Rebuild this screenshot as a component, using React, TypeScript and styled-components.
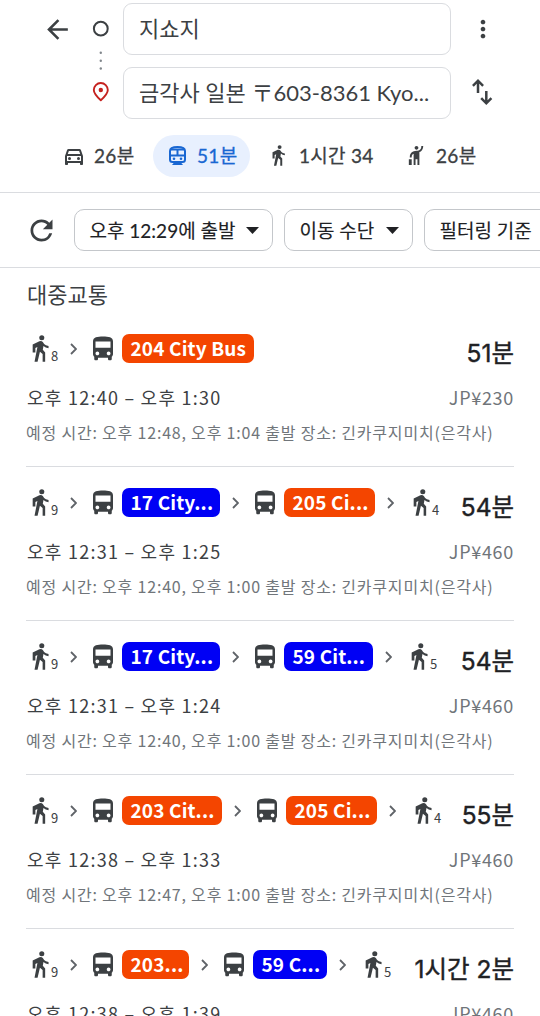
import React from "react";
import styled, { createGlobalStyle } from "styled-components";
import {
  MdArrowBack, MdDirectionsBus, MdHail, MdMoreVert, MdRefresh, MdOutlineDirectionsCar,
} from "react-icons/md";

const ui = `Lato, "Noto Sans CJK KR", sans-serif`;
const numeric = `Inter, "Noto Sans CJK KR", sans-serif`;
const body = `"Noto Sans CJK KR", sans-serif`;
const ORANGE = "#f44500";
const BLUE = "#0000f5";

const Global = createGlobalStyle`
  * { box-sizing: border-box; }
  html, body { margin: 0; background: #fff; overflow: hidden; }
`;

const Page = styled.main`
  width: 540px;
  height: 1016px;
  overflow: hidden;
  background: #fff;
  color: #3c4043;
  font-family: ${ui};
  white-space: nowrap;
`;

const Header = styled.header`
  height: 193px;
  border-bottom: 1px solid #dadce0;
`;

const Search = styled.div`
  display: grid;
  grid-template-columns: 77px 22px 11px 328px 1fr;
  height: 119px;
  padding: 3px 0 0 13px;
`;

const BackCell = styled.div`
  display: flex;
  padding: 10.5px 0 0 29px;
`;

const Stops = styled.div`
  padding-top: 16px;
`;

const Fields = styled.div`
  grid-column: 4;
  display: flex;
  flex-direction: column;
  gap: 12px;
`;

const Field = styled.div`
  height: 52px;
  border: 1px solid #dadce0;
  border-radius: 9px;
  padding: 0 15px;
  font-size: 22px;
  line-height: 49px;
`;

const SideActions = styled.div`
  display: flex;
  flex-direction: column;
  align-items: center;
  width: 63px;
  padding-top: 12px;
  gap: 33px;
`;

const Modes = styled.nav`
  display: flex;
  height: 42px;
  margin-top: 16px;
  padding-left: 50px;
`;

const Mode = styled.div<{ $width: number; $active?: boolean }>`
  display: flex;
  align-items: center;
  width: ${(p) => p.$width}px;
  margin-right: ${(p) => (p.$active ? 5 : 0)}px;
  padding: 0 0 1px 12px;
  border-radius: 21px;
  font-size: 19px;
  letter-spacing: 0.3px;
  -webkit-text-stroke: 0.3px currentColor;
  color: ${(p) => (p.$active ? "#1967d2" : "#3c4043")};
  background: ${(p) => (p.$active ? "#e8f0fe" : "transparent")};
`;

const ModeIcon = styled.span`
  display: flex;
  justify-content: center;
  flex: none;
  width: 24px;
  margin-right: 8px;
`;

const ModeLabel = styled.span`
  padding-bottom: 2px;
`;

const Filters = styled.div`
  display: flex;
  align-items: center;
  gap: 11px;
  height: 75px;
  padding-left: 25px;
  border-bottom: 1px solid #dadce0;
`;

const RefreshCell = styled.div`
  display: flex;
  flex: none;
  width: 37.5px;
`;

const Chip = styled.div<{ $width: number }>`
  display: flex;
  flex: none;
  align-items: center;
  justify-content: space-between;
  width: ${(p) => p.$width}px;
  height: 42px;
  padding: 0 13px 2px 15px;
  border: 1px solid #c4c7cb;
  border-radius: 10px;
  color: #202124;
  font-size: 19px;
  -webkit-text-stroke: 0.15px currentColor;
`;

const Title = styled.h1`
  margin: 0;
  height: 45px;
  padding: 12px 27px 0;
  font: 400 22px/30px ${ui};
`;

const Route = styled.section`
  height: 154px;
  margin: 0 26px;
  padding-top: 21px;
  border-bottom: 1px solid #dadce0;
`;

const Legs = styled.div`
  display: flex;
  align-items: center;
  height: 29px;
`;

const Walk = styled.div`
  display: flex;
  align-items: flex-end;
  width: 33px;
  height: 29px;
  padding: 0 0 1px 6px;
`;

const Minutes = styled.sub`
  margin-left: 2px;
  font: 400 13px/13px ${body};
`;

const Arrow = styled.svg`
  flex: none;
  width: 7px;
  height: 12px;
  margin: 0 13px 0 11px;
`;

const BusCell = styled.span`
  display: flex;
  flex: none;
  width: 30px;
  margin: 0 4px 0 -2px;
`;

const Badge = styled.span<{ $bg: string; $width: number }>`
  width: ${(p) => p.$width}px;
  height: 29px;
  padding-left: 8.5px;
  margin-right: 1px;
  border-radius: 7px;
  background: ${(p) => p.$bg};
  color: #fff;
  font: 700 19px/28px ${body};
  letter-spacing: 0.15px;
`;

const Duration = styled.strong`
  margin-left: auto;
  padding-top: 9px;
  color: #202124;
  font: 400 24.5px/29px ${numeric};
  -webkit-text-stroke: 0.4px currentColor;
`;

const Times = styled.div`
  display: flex;
  justify-content: space-between;
  height: 26px;
  margin-top: 21px;
  padding-left: 1px;
  font: 400 18px/26px ${body};
  letter-spacing: 1.25px;
`;

const Fare = styled.span`
  color: #70757a;
  letter-spacing: 0.7px;
`;

const Note = styled.p`
  margin: 10px 0 0;
  color: #70757a;
  font: 400 16px/24px ${body};
  letter-spacing: 0.8px;
`;

function WalkIcon({ height }: { height: number }) {
  return (
    <svg width={(height * 50) / 80} height={height} viewBox="0 0 50 80" fill="currentColor">
      <circle cx="29" cy="8" r="7.5" />
      <path d="M2 28 22 18.500q6-2 10 2l4 6q4 5 13 6v7q-9-1-15-7l-2 11 7 8v28h-7.500v-23l-8-7-7 30H7.500l8.500-44-6 3v13H2Z" />
    </svg>
  );
}

function TrainIcon() {
  return (
    <svg width="17" height="20" viewBox="0 0 17 20" fill="none" stroke="currentColor" strokeWidth="2">
      <path d="M1 5Q1 1 8.500 1T16 5v8.500q0 2.500-2.500 2.500h-10Q1 16 1 13.500Z" />
      <path d="M1 9.500h15M8.500 4v5.500M2 3.500h13" />
      <circle cx="5" cy="12.700" r="1.300" fill="currentColor" stroke="none" />
      <circle cx="12" cy="12.700" r="1.300" fill="currentColor" stroke="none" />
      <path d="M3 19l2-2.500h7L14 19Z" fill="currentColor" stroke="none" />
    </svg>
  );
}

function StopMarkers() {
  return (
    <svg width="22" height="90" viewBox="0 0 22 90" fill="none">
      <circle cx="10.8" cy="9.7" r="6.9" stroke="#3c4043" strokeWidth="2" />
      <g fill="#80868b">
        <circle cx="10.8" cy="33.7" r="1.2" />
        <circle cx="10.8" cy="41.7" r="1.2" />
        <circle cx="10.8" cy="49.5" r="1.2" />
      </g>
      <path d="M10.8 81.3C7 77.8 3.8 74.8 3.8 71a7 7 0 0 1 14 0c0 3.800-3.200 6.800-7 10.300Z" stroke="#c5221f" strokeWidth="1.900" strokeLinejoin="round" />
      <circle cx="10.8" cy="71" r="2.2" fill="#c5221f" />
    </svg>
  );
}

function SwapIcon() {
  return (
    <svg width="24" height="30" viewBox="0 0 24 30" fill="none" stroke="#3c4043" strokeWidth="2.500">
      <path d="M7 17V5M1.900 9.800 7 4.700l5.100 5.100M15.300 15v12M10.200 22.200l5.100 5.100 5.100-5.100" />
    </svg>
  );
}

function Caret() {
  return (
    <svg width="13" height="9" viewBox="0 0 13 9">
      <path d="M0 2h13L6.500 9Z" fill="#202124" />
    </svg>
  );
}

function Chevron() {
  return (
    <Arrow viewBox="0 0 7 12" fill="none" stroke="#5f6368" strokeWidth="1.800">
      <path d="M1 1l5 5-5 5" />
    </Arrow>
  );
}

type Bus = { name: string; bg: string; width: number };
type RouteData = { walk: number; buses: Bus[]; end?: number; total: string; times: string; fare: string; note: string };

const note = (a: string, b: string) => `예정 시간: 오후 ${a}, 오후 ${b} 출발 장소: 긴카쿠지미치(은각사)`;

const routes: RouteData[] = [
  { walk: 8, buses: [{ name: "204 City Bus", bg: ORANGE, width: 132 }], total: "51분", times: "오후 12:40 – 오후 1:30", fare: "JP¥230", note: note("12:48", "1:04") },
  { walk: 9, buses: [{ name: "17 City...", bg: BLUE, width: 98 }, { name: "205 Ci...", bg: ORANGE, width: 91 }], end: 4, total: "54분", times: "오후 12:31 – 오후 1:25", fare: "JP¥460", note: note("12:40", "1:00") },
  { walk: 9, buses: [{ name: "17 City...", bg: BLUE, width: 98 }, { name: "59 Cit...", bg: BLUE, width: 89 }], end: 5, total: "54분", times: "오후 12:31 – 오후 1:24", fare: "JP¥460", note: note("12:40", "1:00") },
  { walk: 9, buses: [{ name: "203 Cit...", bg: ORANGE, width: 100 }, { name: "205 Ci...", bg: ORANGE, width: 91 }], end: 4, total: "55분", times: "오후 12:38 – 오후 1:33", fare: "JP¥460", note: note("12:47", "1:00") },
  { walk: 9, buses: [{ name: "203...", bg: ORANGE, width: 67 }, { name: "59 C...", bg: BLUE, width: 74 }], end: 5, total: "1시간 2분", times: "오후 12:38 – 오후 1:39", fare: "JP¥460", note: note("12:47", "1:00") },
];

function WalkLeg({ minutes }: { minutes: number }) {
  return (
    <Walk>
      <WalkIcon height={27} />
      <Minutes>{minutes}</Minutes>
    </Walk>
  );
}

function RouteItem({ route }: { route: RouteData }) {
  return (
    <Route>
      <Legs>
        <WalkLeg minutes={route.walk} />
        {route.buses.map((bus, i) => (
          <React.Fragment key={i}>
            <Chevron />
            <BusCell><MdDirectionsBus size={30} /></BusCell>
            <Badge $bg={bus.bg} $width={bus.width}>{bus.name}</Badge>
          </React.Fragment>
        ))}
        {route.end && (
          <>
            <Chevron />
            <WalkLeg minutes={route.end} />
          </>
        )}
        <Duration>{route.total}</Duration>
      </Legs>
      <Times>
        <span>{route.times}</span>
        <Fare>{route.fare}</Fare>
      </Times>
      <Note>{route.note}</Note>
    </Route>
  );
}

export default function App() {
  return (
    <Page>
      <Global />
      <Header>
        <Search>
          <BackCell><MdArrowBack size={31} /></BackCell>
          <Stops><StopMarkers /></Stops>
          <Fields>
            <Field>지쇼지</Field>
            <Field>금각사 일본 〒603-8361 Kyo...</Field>
          </Fields>
          <SideActions>
            <MdMoreVert size={28} />
            <SwapIcon />
          </SideActions>
        </Search>
        <Modes>
          <Mode $width={103}><ModeIcon><MdOutlineDirectionsCar size={24} /></ModeIcon><ModeLabel>26분</ModeLabel></Mode>
          <Mode $width={97} $active><ModeIcon><TrainIcon /></ModeIcon><ModeLabel>51분</ModeLabel></Mode>
          <Mode $width={137}><ModeIcon><WalkIcon height={21} /></ModeIcon><ModeLabel>1시간 34</ModeLabel></Mode>
          <Mode $width={100}><ModeIcon><MdHail size={23} /></ModeIcon><ModeLabel>26분</ModeLabel></Mode>
        </Modes>
      </Header>
      <Filters>
        <RefreshCell><MdRefresh size={33} /></RefreshCell>
        <Chip $width={199}>오후 12:29에 출발<Caret /></Chip>
        <Chip $width={129}>이동 수단<Caret /></Chip>
        <Chip $width={150}>필터링 기준<Caret /></Chip>
      </Filters>
      <Title>대중교통</Title>
      {routes.map((r, i) => <RouteItem key={i} route={r} />)}
    </Page>
  );
}
